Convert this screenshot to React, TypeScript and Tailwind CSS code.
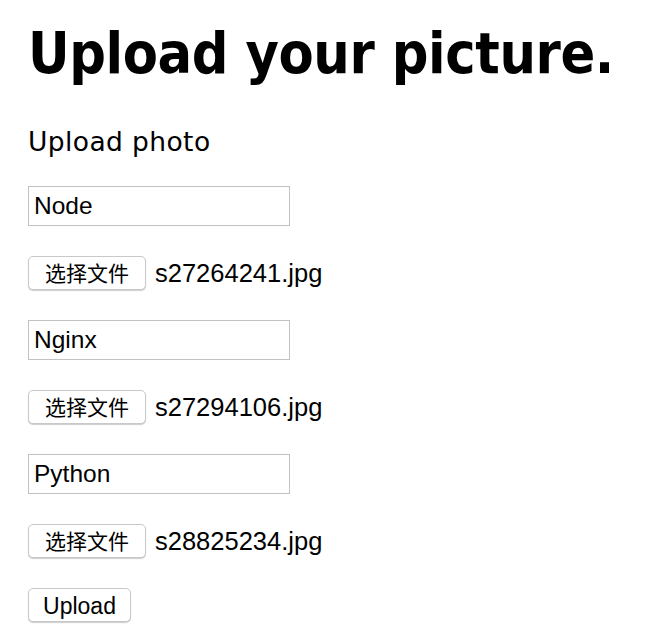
import { useState } from "react"

const rows = [
  { name: "Node", file: "s27264241.jpg" },
  { name: "Nginx", file: "s27294106.jpg" },
  { name: "Python", file: "s28825234.jpg" },
]

export default function App() {
  const [items, setItems] = useState(rows)

  return (
    <div className="min-h-[637px] bg-white pl-[28px] text-black font-['Liberation_Sans',Arial,sans-serif]">
      <h1 className="pt-[23px] whitespace-nowrap text-[57px] leading-[60px] tracking-[-0.4px] font-bold font-['DejaVu_Sans_Condensed','DejaVu_Sans',sans-serif] font-stretch-condensed">
        Upload your picture.
      </h1>
      <h2 className="mt-[44px] text-[26.5px] leading-[30px] tracking-[0.4px] font-['DejaVu_Sans',sans-serif]">
        Upload photo
      </h2>
      <form className="mt-[29px] flex flex-col gap-[30px]" onSubmit={(e) => e.preventDefault()}>
        {items.map((item, i) => (
          <div key={i} className="flex flex-col gap-[30px]">
            <input
              type="text"
              value={item.name}
              onChange={(e) =>
                setItems(items.map((it, j) => (j === i ? { ...it, name: e.target.value } : it)))
              }
              className="h-[40px] w-[262px] border border-[#c2c2c2] px-[5px] text-[24.5px] outline-none"
            />
            <div className="flex h-[34px] items-center gap-[9px]">
              <button
                type="button"
                className="h-[34px] w-[118px] rounded-[5px] border border-[#c9c9c9] bg-white text-[21px] font-['Noto_Sans_CJK_SC',sans-serif] shadow-[0_1px_1px_rgba(0,0,0,0.2)]"
              >
                选择文件
              </button>
              <span className="text-[25.5px]">{item.file}</span>
            </div>
          </div>
        ))}
        <button
          type="submit"
          className="h-[34px] w-[103px] rounded-[5px] border border-[#c9c9c9] bg-white text-[23px] shadow-[0_1px_1px_rgba(0,0,0,0.2)]"
        >
          Upload
        </button>
      </form>
    </div>
  )
}
